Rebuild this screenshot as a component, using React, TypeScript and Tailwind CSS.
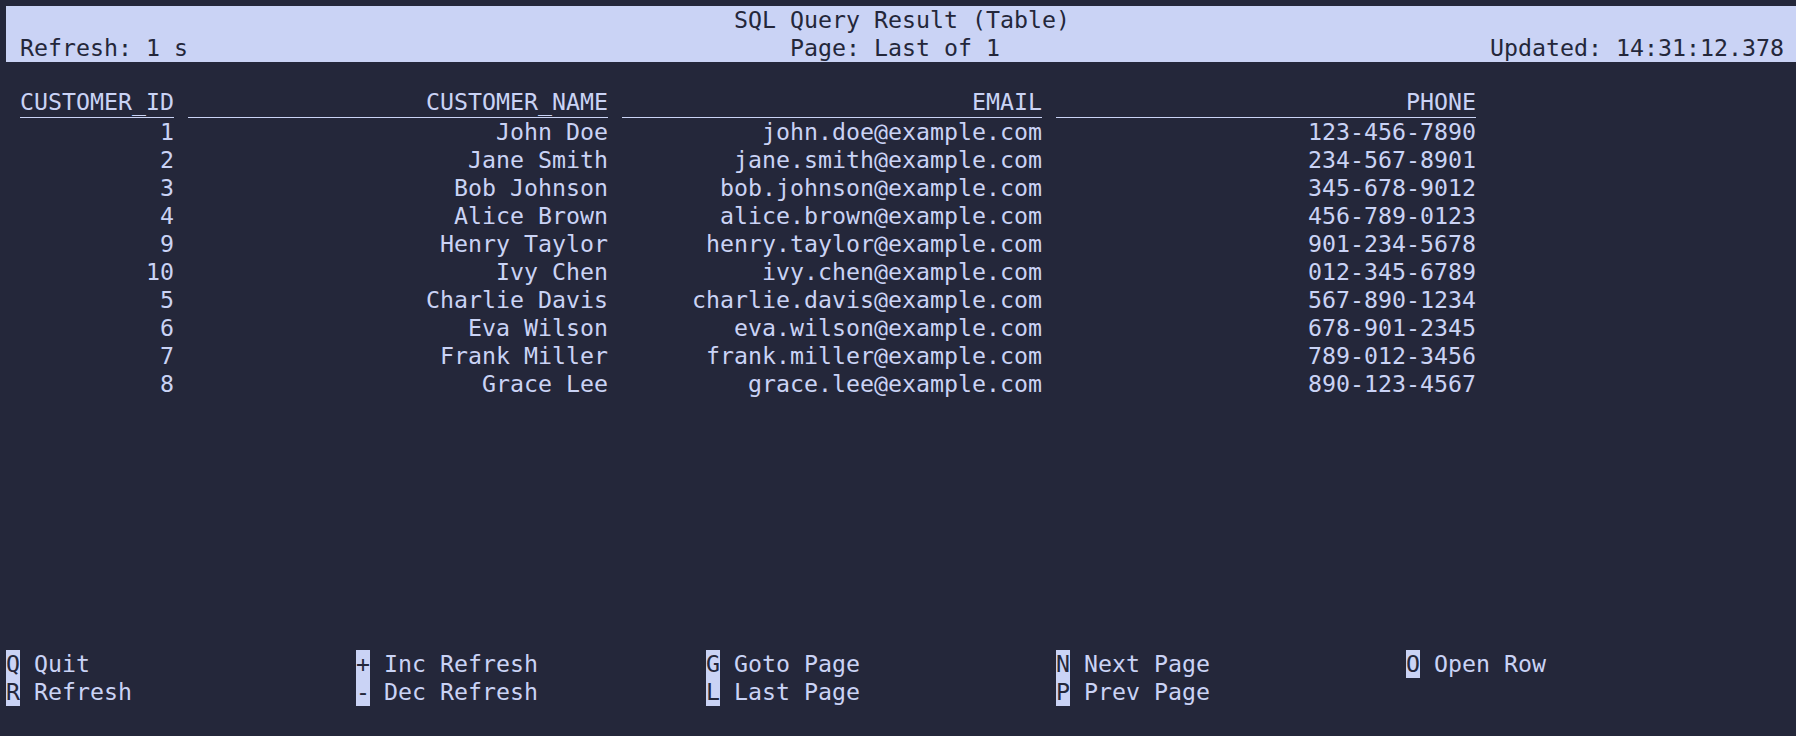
import React from 'react';

// Terminal grid: 14px per column, 28px per row
const rows = [
  { id: '1', name: 'John Doe', email: 'john.doe@example.com', phone: '123-456-7890' },
  { id: '2', name: 'Jane Smith', email: 'jane.smith@example.com', phone: '234-567-8901' },
  { id: '3', name: 'Bob Johnson', email: 'bob.johnson@example.com', phone: '345-678-9012' },
  { id: '4', name: 'Alice Brown', email: 'alice.brown@example.com', phone: '456-789-0123' },
  { id: '9', name: 'Henry Taylor', email: 'henry.taylor@example.com', phone: '901-234-5678' },
  { id: '10', name: 'Ivy Chen', email: 'ivy.chen@example.com', phone: '012-345-6789' },
  { id: '5', name: 'Charlie Davis', email: 'charlie.davis@example.com', phone: '567-890-1234' },
  { id: '6', name: 'Eva Wilson', email: 'eva.wilson@example.com', phone: '678-901-2345' },
  { id: '7', name: 'Frank Miller', email: 'frank.miller@example.com', phone: '789-012-3456' },
  { id: '8', name: 'Grace Lee', email: 'grace.lee@example.com', phone: '890-123-4567' },
];

const keyGroups: [string, string][][] = [
  [['Q', 'Quit'], ['R', 'Refresh']],
  [['+', 'Inc Refresh'], ['-', 'Dec Refresh']],
  [['G', 'Goto Page'], ['L', 'Last Page']],
  [['N', 'Next Page'], ['P', 'Prev Page']],
  [['O', 'Open Row']],
];

function Row({ cells, header }: { cells: string[]; header?: boolean }) {
  // header cells: text lifted 2px so the underscores stay visible above the underline
  const cell = header
    ? 'text-right leading-[24px] pb-[4px] shadow-[inset_0_-1px_0_#cad3f5]'
    : 'text-right';
  return (
    <div className="flex h-[28px] ml-[14px] gap-[14px]">
      <div className={`w-[154px] ${cell}`}>{cells[0]}</div>
      <div className={`w-[420px] ${cell}`}>{cells[1]}</div>
      <div className={`w-[420px] ${cell}`}>{cells[2]}</div>
      <div className={`w-[420px] ${cell}`}>{cells[3]}</div>
    </div>
  );
}

export default function App() {
  return (
    <div className="h-[736px] w-full overflow-hidden bg-[#24273a] text-[#cad3f5] font-['DejaVu_Sans_Mono',monospace] text-[23.25px] leading-[28px] whitespace-pre pt-[6px] pl-[6px] flex flex-col">
      {/* ── Status bar ─────────────────────────── */}
      <div className="w-[1792px] bg-[#cad3f5] text-[#24273a]">
        <div className="h-[28px] text-center">SQL Query Result (Table)</div>
        <div className="h-[28px] px-[14px] grid grid-cols-[1fr_auto_1fr]">
          <span>Refresh: 1 s</span>
          <span className="pr-[14px]">Page: Last of 1</span>
          <span className="text-right">Updated: 14:31:12.378</span>
        </div>
      </div>

      {/* ── Table ──────────────────────────────── */}
      <div className="mt-[28px]">
        <Row header cells={['CUSTOMER_ID', 'CUSTOMER_NAME', 'EMAIL', 'PHONE']} />
        {rows.map((r) => (
          <Row key={r.id} cells={[r.id, r.name, r.email, r.phone]} />
        ))}
      </div>

      {/* ── Key hints ──────────────────────────── */}
      <div className="mt-auto mb-[30px] flex">
        {keyGroups.map((group, i) => (
          <div key={i} className="w-[350px] flex flex-col">
            {group.map(([k, label]) => (
              <div key={k} className="h-[28px] flex">
                <span className="w-[14px] text-center bg-[#cad3f5] text-[#24273a]">{k}</span>
                <span className="ml-[14px]">{label}</span>
              </div>
            ))}
          </div>
        ))}
      </div>
    </div>
  );
}
